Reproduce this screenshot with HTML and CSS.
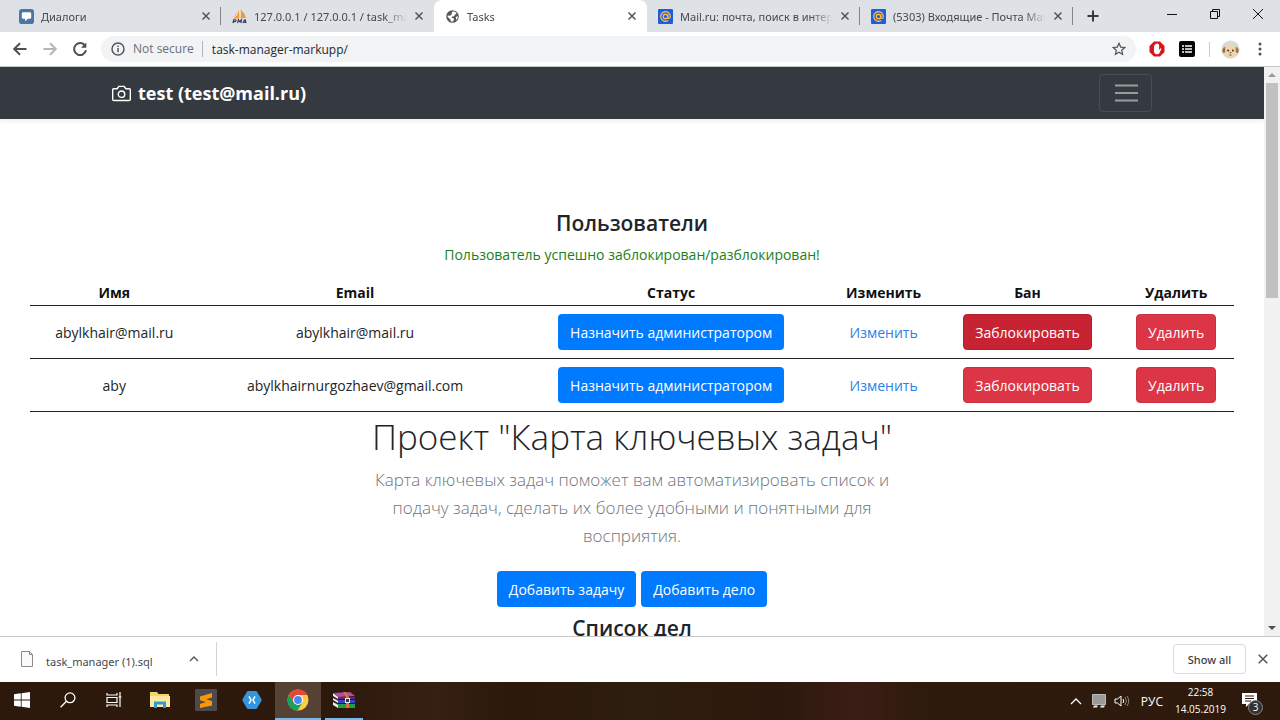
FILE: index.html
```html
<!DOCTYPE html>
<html lang="ru">
<head>
<meta charset="utf-8">
<title>Tasks</title>
<link rel="stylesheet" href="styles.css">
</head>
<body>
<header class="tabstrip">
  <nav class="tabs" aria-label="Tabs">
    <div class="tab tab-sep">
      <svg class="fav" viewBox="0 0 16 16"><rect width="16" height="16" rx="3" fill="#4a76a8"/><path d="M4.500 3.500h7a1.500 1.500 0 0 1 1.500 1.500v4a1.500 1.500 0 0 1-1.500 1.500H9.500L6.500 13v-2.500h-2A1.500 1.500 0 0 1 3 9V5a1.500 1.500 0 0 1 1.500-1.500z" fill="#fff"/></svg>
      <span class="tab-title">Диалоги</span>
      <button class="x" aria-label="Close tab"><svg viewBox="0 0 10 10"><path d="M1.500 1.500l7 7m0-7l-7 7"/></svg></button>
    </div>
    <div class="tab">
      <svg class="fav" viewBox="0 0 16 16"><path d="M6.500 1C6.800 5 5.500 8 1 10h6.500C8 7 8 4 6.500 1zM9 .500c3 2 5 5.500 6 9H9c.8-3 .8-6 0-9zM4.500 3.500C4 6 3 7.500 1 8.800 3.500 8 5 6 4.500 3.500z" fill="#f29b30"/><path d="M1 15l.8-3.500h1.700q1 .2.700 1.100-.3.900-1.400.9H1.700M6 15l.8-3.500 1.300 2 2-2-.7 3.500M11.500 15l2-3.500h.6l.9 3.500M12 14h2.500" fill="none" stroke="#34365e" stroke-width="1.200"/></svg>
      <span class="tab-title">127.0.0.1 / 127.0.0.1 / task_mar</span>
      <button class="x" aria-label="Close tab"><svg viewBox="0 0 10 10"><path d="M1.500 1.500l7 7m0-7l-7 7"/></svg></button>
    </div>
    <div class="tab tab-active">
      <svg class="fav" viewBox="0 0 16 16"><circle cx="8" cy="8" r="6.700" fill="#54585c"/><path d="M8.500 2.500c1.500.2 3 .9 3.900 2.200L10.500 6l-.8 1.600-2 .4-.7 1.300 2 .5.800 1.300-1.600 2.600C6.500 13.500 5.800 13 6 11.500L4.500 10 2.700 8.300l.2-1.500 2.600.4 1.600-1.500.2-1.700z" fill="#fff"/><path d="M11.500 8.500l2.300-.8c0 1.700-.7 3-1.800 4z" fill="#fff"/></svg>
      <span class="tab-title">Tasks</span>
      <button class="x" aria-label="Close tab"><svg viewBox="0 0 10 10"><path d="M1.500 1.500l7 7m0-7l-7 7"/></svg></button>
    </div>
    <div class="tab tab-sep">
      <svg class="fav" viewBox="0 0 16 16"><rect width="16" height="16" rx="1" fill="#1b5fe0"/><g fill="none" stroke="#f7b84a" stroke-width="1.400"><circle cx="8" cy="8" r="2.400"/><path d="M10.400 5.600v3.200c0 2 2.700 1.600 2.700-.8a5.100 5.100 0 1 0-2.300 4.200"/></g></svg>
      <span class="tab-title">Mail.ru: почта, поиск в интерн</span>
      <button class="x" aria-label="Close tab"><svg viewBox="0 0 10 10"><path d="M1.500 1.500l7 7m0-7l-7 7"/></svg></button>
    </div>
    <div class="tab tab-sep">
      <svg class="fav" viewBox="0 0 16 16"><rect width="16" height="16" rx="1" fill="#1b5fe0"/><g fill="none" stroke="#f7b84a" stroke-width="1.400"><circle cx="8" cy="8" r="2.400"/><path d="M10.400 5.600v3.200c0 2 2.700 1.600 2.700-.8a5.100 5.100 0 1 0-2.300 4.200"/></g></svg>
      <span class="tab-title">(5303) Входящие - Почта Mail</span>
      <button class="x" aria-label="Close tab"><svg viewBox="0 0 10 10"><path d="M1.500 1.500l7 7m0-7l-7 7"/></svg></button>
    </div>
    <button class="newtab" aria-label="New tab"><svg viewBox="0 0 12 12"><path d="M6 0.500v11M0.500 6h11"/></svg></button>
  </nav>
  <div class="winbtns">
    <button aria-label="Minimize"><svg viewBox="0 0 12 12"><path d="M1 6.500h10"/></svg></button>
    <button aria-label="Restore"><svg viewBox="0 0 12 12"><path d="M1.500 3.500h7v7h-7zM3.500 3.500v-2h7v7h-2"/></svg></button>
    <button aria-label="Close"><svg viewBox="0 0 12 12"><path d="M1 1l10 10M11 1L1 11"/></svg></button>
  </div>
</header>

<div class="toolbar">
  <div class="navbtns">
    <button aria-label="Back"><svg viewBox="0 0 16 16"><path d="M14.500 8H2.500M8 2.200L2.200 8 8 13.800"/></svg></button>
    <button class="dim" aria-label="Forward"><svg viewBox="0 0 16 16"><path d="M1.500 8h12M8 2.200L13.800 8 8 13.800"/></svg></button>
    <button aria-label="Reload"><svg viewBox="0 0 16 16"><path d="M13.300 5A6 6 0 1 0 14 9.300"/><path d="M14.300 1.500v5.300H9z" fill="#4d5156" stroke="none"/></svg></button>
  </div>
  <div class="omnibox">
    <svg class="info" viewBox="0 0 14 14"><circle cx="7" cy="7" r="6"/><path d="M7 6v4.300M7 3.500v1.400"/></svg>
    <label class="secure" for="url">Not secure</label>
    <input id="url" class="url" type="text" value="task-manager-markupp/">
    <button class="star" aria-label="Bookmark"><svg viewBox="0 0 14 14"><path d="M7 1.300l1.700 3.800 4.100.4-3.100 2.800.9 4.100L7 10.300l-3.600 2.100.9-4.100L1.200 5.500l4.100-.4z"/></svg></button>
  </div>
  <div class="exts">
    <svg viewBox="0 0 16 16"><path d="M5 .5h6L15.500 5v6L11 15.500H5L.5 11V5z" fill="#d9151b"/><path d="M5 9V4.500q.6-.8 1.200 0V3.300q.7-.9 1.300 0V2.700q.7-.8 1.300 0v.8q.8-.8 1.300 0V9l1.300-1.600q1-.3.900.5L10.500 12q-.6 1.200-2 1.200H7.700Q5 13 5 10z" fill="#fff"/></svg>
    <svg viewBox="0 0 16 16"><rect width="16" height="16" rx="2" fill="#050505"/><path d="M3 5h2m1 0h7M3 8h2m1 0h7M3 11h2m1 0h7" stroke="#fff" stroke-width="1.300"/></svg>
    <span class="extsep"></span>
    <svg class="avatar" viewBox="0 0 20 20"><circle cx="10" cy="10" r="9.500" fill="#d5dadb"/><path d="M4 8q6-7 12 0l.5 5q-1 5.500-6.500 6-5.500-.5-6.500-6z" fill="#f1d5ab"/><path d="M4.500 7Q1 8 1.500 12.500q2 2.500 3-.5zM15.500 7q3.500 1 3 5.500-2 2.500-3-.5z" fill="#a8703d"/><circle cx="7.500" cy="11" r="1" fill="#333"/><circle cx="12.500" cy="11" r="1" fill="#333"/><path d="M8.800 13h2.400L10 14.300zM8 15.500q2 1.500 4 0" fill="#4a2b1b"/></svg>
    <svg class="dots" viewBox="0 0 4 16"><circle cx="2" cy="3" r="1.500"/><circle cx="2" cy="8" r="1.500"/><circle cx="2" cy="13" r="1.500"/></svg>
  </div>
</div>

<div class="viewport">
  <main class="page">
    <div class="navbar">
      <a class="brand" href="#"><svg viewBox="0 0 20 20"><path d="M18 17.300H2a1.300 1.300 0 0 1-1.300-1.300V6.300A1.300 1.300 0 0 1 2 5h3.500l1.700-2.500h5.600L14.500 5H18a1.300 1.300 0 0 1 1.300 1.300V16a1.300 1.300 0 0 1-1.300 1.300z"/><circle cx="10" cy="10.700" r="3.400"/></svg>test (test@mail.ru)</a>
      <button class="toggler" aria-label="Menu"><svg viewBox="0 0 28 28"><path d="M3 6.500h23M3 14h23M3 21.500h23"/></svg></button>
    </div>
    <section class="users">
      <h4 class="heading">Пользователи</h4>
      <p class="success">Пользователь успешно заблокирован/разблокирован!</p>
      <table class="table">
        <colgroup><col class="c-name"><col class="c-mail"><col class="c-status"><col class="c-edit"><col class="c-ban"><col class="c-del"></colgroup>
        <thead><tr><th>Имя</th><th>Email</th><th>Статус</th><th>Изменить</th><th>Бан</th><th>Удалить</th></tr></thead>
        <tbody>
          <tr><td>abylkhair@mail.ru</td><td>abylkhair@mail.ru</td><td><button class="btn primary">Назначить администратором</button></td><td><a class="link" href="#">Изменить</a></td><td><button class="btn danger pressed">Заблокировать</button></td><td><button class="btn danger">Удалить</button></td></tr>
          <tr><td>aby</td><td>abylkhairnurgozhaev@gmail.com</td><td><button class="btn primary">Назначить администратором</button></td><td><a class="link" href="#">Изменить</a></td><td><button class="btn danger">Заблокировать</button></td><td><button class="btn danger">Удалить</button></td></tr>
        </tbody>
      </table>
    </section>
    <section class="project">
      <h1 class="title">Проект "Карта ключевых задач"</h1>
      <p class="lead">Карта ключевых задач поможет вам автоматизировать список и подачу задач, сделать их более удобными и понятными для восприятия.</p>
      <div class="actions"><button class="btn primary">Добавить задачу</button><button class="btn primary">Добавить дело</button></div>
      <h4 class="heading">Список дел</h4>
    </section>
  </main>
  <div class="scrollbar">
    <svg viewBox="0 0 16 16"><path d="M4 10h8L8 6z" fill="#9a9a9a"/></svg>
    <div class="track"><div class="thumb"></div></div>
    <svg viewBox="0 0 16 16"><path d="M4 6h8l-4 4z" fill="#505050"/></svg>
  </div>
</div>

<div class="downloads">
  <div class="dl-item">
    <svg class="file" viewBox="0 0 12 16"><path d="M.5.500h8l3 3v12H.5zM8.500.500v3h3" fill="#fafafa" stroke="#8b8b8b"/></svg>
    <span class="dl-name">task_manager (1).sql</span>
    <button class="chev" aria-label="Download menu"><svg viewBox="0 0 10 10"><path d="M1 7l4-4 4 4"/></svg></button>
  </div>
  <div class="dl-right">
    <button class="showall">Show all</button>
    <button class="x x-big" aria-label="Close downloads"><svg viewBox="0 0 10 10"><path d="M.7.700l8.600 8.600m0-8.600L.7 9.300"/></svg></button>
  </div>
</div>

<footer class="taskbar">
  <div class="apps">
    <button aria-label="Start"><svg viewBox="0 0 16 16" fill="#fff"><path d="M0 2.300l6.800-1v6.300H0zM7.600 1.200L16 0v7.600H7.600zM0 8.400h6.800v6.300L0 13.700zM7.600 8.400H16V16l-8.400-1.200z"/></svg></button>
    <button aria-label="Search"><svg viewBox="0 0 16 16" fill="none" stroke="#fff" stroke-width="1.300"><circle cx="10" cy="5.800" r="4.900"/><path d="M6.400 9.300L.6 15.300"/></svg></button>
    <button aria-label="Task view"><svg viewBox="0 0 16 16" fill="none" stroke="#fff" stroke-width="1.200"><path d="M1 1v2h10V1M1 5.500h10v5H1zM1 15v-2h10v2M14 0v15M12.500 5h3"/></svg></button>
    <button aria-label="Explorer"><svg class="big" viewBox="0 0 20 18"><path d="M0 1h7l1.500 2H19v13H0z" fill="#f5d36b"/><path d="M0 5h20v11H0z" fill="#ffe9a0"/><path d="M4 10.500h12V17h-3v-3.500H7V17H4z" fill="#2d9bd6"/></svg></button>
    <button aria-label="Sublime Text"><svg class="large" viewBox="0 0 22 22"><rect width="22" height="22" rx="1" fill="#4c4b4a"/><path d="M17 4v4.500L11 10.300l6 1.700v4.500L5 19v-4l6-2-6-1.800V7.500z" fill="#f9970b"/></svg></button>
    <button aria-label="Xamarin"><svg class="big" viewBox="0 0 20 20"><path d="M6.300 1h7.400q1 0 1.500.9l4.200 7.200q.5.900 0 1.800l-4.200 7.200q-.5.900-1.500.9H6.300q-1 0-1.500-.9L.6 10.900q-.5-.9 0-1.800l4.200-7.200q.5-.9 1.500-.9z" fill="#3595dc"/><path d="M7 6.300L9 10l-2 3.700M13 6.300L11 10l2 3.700" fill="none" stroke="#fff" stroke-width="1.500"/></svg></button>
    <button class="running current" aria-label="Chrome"><svg class="large" viewBox="0 0 22 22"><circle cx="11" cy="11" r="10.500" fill="#ffcd40"/><path d="M1.900 5.800A10.500 10.500 0 0 0 10.500 21.500L15.500 13.500 11 11 6 12z" fill="#17a05e"/><path d="M11 6h9.200A10.500 10.500 0 0 0 1.900 5.800L6.500 13z" fill="#e3473a"/><circle cx="11" cy="11" r="5" fill="#fff"/><circle cx="11" cy="11" r="3.900" fill="#4788f2"/></svg></button>
    <button class="running" aria-label="WinRAR"><svg class="large" viewBox="0 0 22 20"><path d="M1 3l16-1 5 4-17 1z" fill="#b84aa5"/><path d="M5 7h17v2H5z" fill="#702074"/><path d="M1 8l4 2h17v3H5z" fill="#3348c0"/><path d="M1 13l4 1h17v4H5z" fill="#249b4a"/><path d="M0 3l5 4v2L0 6zM0 8l5 3v2l-5-3zM0 12l5 3v3l-5-3z" fill="#eee"/><path d="M10 2h3l3 5v11h-3V7z" fill="#ca7d31"/><path d="M12 8h5v5h-5z" fill="#eee"/><path d="M13 9h3v3h-3z" fill="#333"/></svg></button>
  </div>
  <div class="tray">
    <svg class="t-chev" viewBox="0 0 12 12"><path d="M1 9l5-5 5 5" fill="none" stroke="#fff" stroke-width="1.300"/></svg>
    <svg viewBox="0 0 16 16"><path d="M1.500 1.500h13v10h-13z" fill="#9a9a9a" stroke="#bbb"/><path d="M2 14.500h4l1-2H3zM9 14.500h4l1-2h-4z" fill="#eee"/></svg>
    <svg viewBox="0 0 16 16" fill="none" stroke="#fff"><path d="M1 6h2.500L7 3v10l-3.500-3H1zM9 6q1.500 2 0 4"/><path d="M11 4q3 4 0 8M13 3q3.500 5 0 10" stroke="#8c8078"/></svg>
    <span class="lang">РУС</span>
    <span class="clock">22:58<br>14.05.2019</span>
    <span class="notes"><svg viewBox="0 0 18 18"><path d="M1 1h15v11H8l-3 3v-3H1z" fill="#fff"/><path d="M4 4h9M4 6.500h9M4 9h6" stroke="#2b190c"/></svg><span class="badge">3</span></span>
  </div>
</footer>
</body>
</html>
```
FILE: styles.css
```css
* { box-sizing: border-box; }
body {
  margin: 0;
  height: 100vh;
  display: flex;
  flex-direction: column;
  overflow: hidden;
  background: #fff;
  color: #212529;
  font-family: "Open Sans", "Noto Sans", sans-serif;
  font-size: 14px;
}
button { font-family: inherit; border: 0; padding: 0; background: none; display: inline-flex; align-items: center; justify-content: center; }
svg { display: block; flex: none; width: 16px; height: 16px; }
a { text-decoration: none; }

/* Tab strip */
.tabstrip { flex: none; height: 32px; display: flex; justify-content: space-between; background: #dee1e6; }
.tabs { display: flex; flex: 1; min-width: 0; padding-left: 8px; }
.tab {
  position: relative;
  flex: 0 1 213px;
  min-width: 0;
  display: flex;
  align-items: center;
  gap: 7px;
  padding: 0 10px 0 11px;
  font-family: "Noto Sans", sans-serif;
  font-size: 11px;
  color: #45494d;
}
.tab-sep::after { content: ""; position: absolute; right: 0; top: 7px; height: 18px; width: 1px; background: #80858b; }
.tab-active { background: #fff; border-radius: 8px 8px 0 0; }
.tab-title {
  flex: 1;
  white-space: nowrap;
  min-width: 0;
  mask-image: linear-gradient(to right, #000 calc(100% - 22px), transparent);
}
.fav { width: 15px; height: 15px; }
.x { width: 10px; height: 10px; }
.x svg { width: 10px; height: 10px; stroke: #50555a; stroke-width: 1.5; }
.newtab { width: 40px; }
.newtab svg { width: 12px; height: 12px; stroke: #35383c; stroke-width: 2; }
.winbtns { display: flex; padding: 0 1px 5px 0; }
.winbtns button { width: 43px; }
.winbtns svg { width: 12px; height: 12px; fill: none; stroke: #111; }

/* Address bar */
.toolbar { flex: none; height: 35px; display: flex; align-items: center; border-bottom: 1px solid #c4c7ca; }
.navbtns { display: flex; gap: 14px; padding: 0 13px 0 12px; }
.navbtns svg { fill: none; stroke: #4d5156; stroke-width: 2; }
.navbtns .dim svg { stroke: #b4b6b9; }
.omnibox { flex: 1; height: 26px; display: flex; align-items: center; padding: 0 10px; border-radius: 13px; background: #f1f3f4; font-size: 12px; }
.info { width: 14px; height: 14px; fill: none; stroke: #55595e; stroke-width: 1.5; }
.secure { padding: 0 8px; color: #6b6f74; line-height: 16px; border-right: 1px solid #b4b7ba; }
.url { flex: 1; min-width: 0; border: 0; background: none; padding: 0 9px; font: inherit; color: #25282b; }
.star svg { width: 14px; height: 14px; fill: none; stroke: #4d5156; stroke-width: 1.2; }
.exts { display: flex; align-items: center; gap: 14px; padding: 0 18px 0 13px; }
.extsep { width: 1px; height: 15px; background: #c9cbce; }
.exts .avatar { width: 19px; height: 19px; margin-left: -3px; }
.exts .dots { width: 4px; fill: #4d5156; margin-left: 4px; }

/* Page */
.viewport { flex: 1; min-height: 0; display: flex; }
.page { flex: 1; min-width: 0; overflow: hidden; }
.navbar {
  height: 52px;
  padding: 0 112px;
  display: flex;
  align-items: center;
  justify-content: space-between;
  background: #343a40;
  box-shadow: 0 2px 4px rgba(0, 0, 0, 0.08);
}
.brand { display: flex; align-items: center; gap: 7px; color: #fff; font-size: 18px; font-weight: 700; }
.brand svg { width: 19px; height: 19px; fill: none; stroke: #fff; stroke-width: 1.5; }
.toggler { width: 53px; height: 38px; border: 1px solid #484e53; border-radius: 4px; }
.toggler svg { width: 28px; height: 28px; stroke: #999c9f; stroke-width: 2; }
.users { padding: 91px 30px 0; text-align: center; }
.heading { margin: 0; font-size: 21px; line-height: 27px; font-weight: 600; }
.success { margin: 7px 0 15px; line-height: 22px; color: #1b801b; }
.table { width: 100%; table-layout: fixed; border-collapse: collapse; }
.table th { padding: 0; line-height: 24px; font-weight: 700; color: #111; }
.table td { padding: 8px 0; height: 53px; }
.table tr { border-bottom: 1px solid #222; }
.c-name { width: 14%; }
.c-mail { width: 26%; }
.c-status { width: 26.5%; }
.c-edit { width: 8.8%; }
.c-ban { width: 15.1%; }
.c-del { width: 9.6%; }
.link { color: #2b80e8; }
.btn { height: 36px; padding: 0 12px; border-radius: 4px; color: #fff; font-size: 14px; white-space: nowrap; }
.primary { background: #007bff; }
.danger { padding: 0 11px; background: #dc3545; border: 1px solid #c93040; }
.pressed { background: #c82333; border-color: #b21f2d; }
.project { max-width: 560px; margin: 0 auto; text-align: center; }
.title { margin: 0 0 4px; font-size: 35px; line-height: 50px; font-weight: 300; white-space: nowrap; }
.lead { max-width: 540px; margin: 0 auto 21px; font-size: 17px; line-height: 28px; font-weight: 300; color: #6c757d; }
.actions { display: flex; justify-content: center; gap: 5px; margin-bottom: 8px; }

/* Scrollbar */
.scrollbar { width: 16px; display: flex; flex-direction: column; background: #f1f1f1; }
.track { flex: 1; padding: 0 2px; }
.thumb { height: 40%; background: #c1c1c1; }

/* Downloads bar */
.downloads { flex: none; height: 46px; display: flex; align-items: center; justify-content: space-between; padding-bottom: 1px; border-top: 1px solid #c8c8c8; background: #fff; }
.dl-item { height: 34px; display: flex; align-items: center; padding: 0 17px 0 21px; border-right: 1px solid #d4d4d4; font-family: "Noto Sans", sans-serif; font-size: 11px; color: #44484c; }
.dl-item .file { width: 12px; height: 16px; margin-right: 13px; }
.dl-name { padding-top: 4px; }
.chev { margin-left: 36px; }
.chev svg { width: 10px; height: 10px; fill: none; stroke: #5a5e62; stroke-width: 1.5; }
.dl-right { display: flex; align-items: center; gap: 12px; padding-right: 12px; }
.showall { width: 73px; height: 30px; border: 1px solid #d8dade; border-radius: 4px; font-family: "Noto Sans", sans-serif; font-size: 11px; font-weight: 500; color: #3c4043; }

/* Taskbar */
.taskbar { flex: none; height: 38px; display: flex; justify-content: space-between; color: #fff; background: linear-gradient(to right, #2d190c, #2d190c 26%, #352013 34%, #2b190c 40%, #2e1e0f 50%, #2c190d 61%, #3b1d14 67%, #2e1b0d 72%, #2d1a0c); }
.apps { display: flex; margin-left: -1px; }
.apps button { width: 46px; border-bottom: 2px solid transparent; }
.apps .running { border-color: #76b9ed; }
.apps .current { background: #554235; }
.apps .running:last-child { width: 38px; margin-left: 4px; }
.apps .big { width: 20px; height: 20px; }
.apps .large { width: 22px; height: 22px; }
.tray { display: flex; align-items: center; gap: 7px; padding-right: 21px; font-size: 12px; }
.t-chev { width: 12px; height: 12px; margin-right: 2px; }
.lang { margin: 0 5px 0 4px; }
.clock { text-align: center; line-height: 17px; font-size: 10px; }
.notes { position: relative; margin-left: 8px; }
.notes svg { width: 18px; height: 18px; }
.badge { position: absolute; left: 7px; top: 8px; width: 15px; height: 15px; border: 1px solid #888; border-radius: 50%; background: #333; font-size: 10px; line-height: 13px; text-align: center; }
```
